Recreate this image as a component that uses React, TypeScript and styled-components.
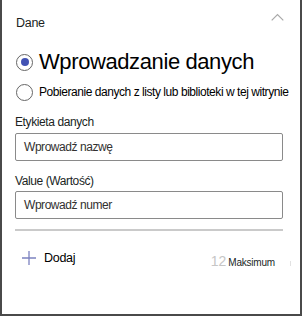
import React from "react";
import styled, { createGlobalStyle } from "styled-components";

const Global = createGlobalStyle`
  html, body { margin: 0; padding: 0; background: #fff; }
  body { font-family: "Liberation Sans", Arial, sans-serif; color: #201f1e; }
  * { box-sizing: border-box; }
`;

const Panel = styled.div`
  width: 302px;
  height: 316px;
  border: 2px solid #4a4a4a;
  border-top: none;
  display: flex;
  flex-direction: column;
  padding: 0 17px 0 13px;
`;

const Header = styled.div`
  height: 46px;
  display: flex;
  align-items: flex-start;
  justify-content: space-between;
  padding: 15px 0 0 1px;
  font-size: 12.5px;
  line-height: 16px;
  letter-spacing: -0.3px;
  color: #201f1e;
`;

const Chevron = styled.svg`
  width: 13px;
  height: 8px;
  margin-top: -2px;
  margin-right: -1px;
`;

const Group = styled.div`
  display: flex;
  flex-direction: column;
  margin-top: 1px;
`;

const RadioRow = styled.label<{ $big?: boolean }>`
  display: flex;
  align-items: center;
  gap: 6px;
  height: 30px;
  white-space: nowrap;
  font-size: ${(p) => (p.$big ? "22px" : "12px")};
  letter-spacing: ${(p) => (p.$big ? "-0.4px" : "-0.45px")};
  color: #000;
`;

const RadioCircle = styled.span<{ $checked?: boolean }>`
  width: 17px;
  height: 17px;
  border-radius: 50%;
  border: 1.5px solid #666;
  display: flex;
  align-items: center;
  justify-content: center;
  flex: none;
  margin-left: 1px;
  &::after {
    content: "";
    display: ${(p) => (p.$checked ? "block" : "none")};
    width: 8px;
    height: 8px;
    border-radius: 50%;
    background: #4252b4;
  }
`;

const Label = styled.div<{ $top: number }>`
  font-size: 12px;
  letter-spacing: -0.4px;
  color: #201f1e;
  height: 20px;
  margin-top: ${(p) => p.$top}px;
  display: flex;
  align-items: center;
`;

const Input = styled.div<{ $top: number }>`
  height: 28px;
  margin-top: ${(p) => p.$top}px;
  border: 1px solid #8a8a8a;
  border-radius: 2px;
  display: flex;
  align-items: center;
  padding-left: 8px;
  font-size: 12px;
  letter-spacing: -0.45px;
  color: #323130;
`;

const Divider = styled.div`
  height: 2px;
  background: #cacaca;
  margin-top: 10px;
`;

const Footer = styled.div`
  display: flex;
  align-items: center;
  justify-content: space-between;
  margin-top: 17px;
  height: 20px;
`;

const AddButton = styled.div`
  display: flex;
  align-items: center;
  gap: 8px;
  padding-left: 7px;
  font-size: 12.5px;
  letter-spacing: -0.3px;
  color: #000;
`;

const Max = styled.div`
  display: flex;
  align-items: baseline;
  gap: 2px;
  padding-top: 6px;
  position: relative;
  &::after {
    content: "";
    position: absolute;
    right: -8px;
    bottom: 3px;
    width: 1px;
    height: 5px;
    background: #e2e2e2;
  }
`;

const MaxNum = styled.span`
  font-size: 14px;
  color: #c6c6c6;
`;

const MaxText = styled.span`
  font-size: 10px;
  letter-spacing: -0.2px;
  color: #201f1e;
  margin-right: 8px;
`;

export default function App() {
  return (
    <>
      <Global />
      <Panel>
        <Header>
          <span>Dane</span>
          <Chevron viewBox="0 0 13 8" fill="none">
            <path d="M0.7 7.3 L6.5 1.5 L12.3 7.3" stroke="#a8a8a8" strokeWidth="1.2" />
          </Chevron>
        </Header>
        <Group>
          <RadioRow $big>
            <RadioCircle $checked />
            <span>Wprowadzanie danych</span>
          </RadioRow>
          <RadioRow>
            <RadioCircle />
            <span>Pobieranie danych z listy lub biblioteki w tej witrynie</span>
          </RadioRow>
        </Group>
        <Label $top={5}>Etykieta danych</Label>
        <Input $top={1}>Wprowadź nazwę</Input>
        <Label $top={10}>Value (Wartość)</Label>
        <Input $top={0}>Wprowadź numer</Input>
        <Divider />
        <Footer>
          <AddButton>
            <svg width="14" height="14" viewBox="0 0 14 14">
              <path d="M7 0 V14 M0 7 H14" stroke="#7c82c0" strokeWidth="1.3" />
            </svg>
            <span>Dodaj</span>
          </AddButton>
          <Max>
            <MaxNum>12</MaxNum>
            <MaxText>Maksimum</MaxText>
          </Max>
        </Footer>
      </Panel>
    </>
  );
}
